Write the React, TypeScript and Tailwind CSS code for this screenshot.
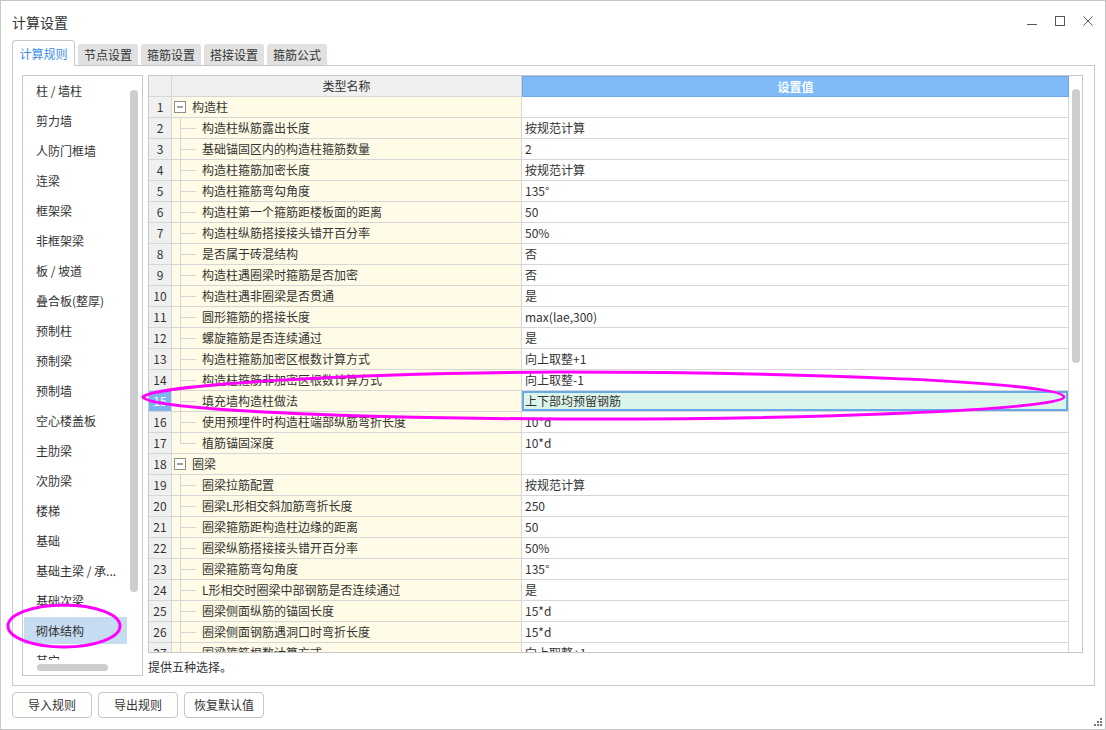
import React from "react";

type Row = { name: string; value?: string; group?: boolean; last?: boolean };

const leftItems = [
  "柱 / 墙柱",
  "剪力墙",
  "人防门框墙",
  "连梁",
  "框架梁",
  "非框架梁",
  "板 / 坡道",
  "叠合板(整厚)",
  "预制柱",
  "预制梁",
  "预制墙",
  "空心楼盖板",
  "主肋梁",
  "次肋梁",
  "楼梯",
  "基础",
  "基础主梁 / 承...",
  "基础次梁",
  "砌体结构",
  "其它",
];

const rows: Row[] = [
  { name: "构造柱", group: true },
  { name: "构造柱纵筋露出长度", value: "按规范计算" },
  { name: "基础锚固区内的构造柱箍筋数量", value: "2" },
  { name: "构造柱箍筋加密长度", value: "按规范计算" },
  { name: "构造柱箍筋弯勾角度", value: "135°" },
  { name: "构造柱第一个箍筋距楼板面的距离", value: "50" },
  { name: "构造柱纵筋搭接接头错开百分率", value: "50%" },
  { name: "是否属于砖混结构", value: "否" },
  { name: "构造柱遇圈梁时箍筋是否加密", value: "否" },
  { name: "构造柱遇非圈梁是否贯通", value: "是" },
  { name: "圆形箍筋的搭接长度", value: "max(lae,300)" },
  { name: "螺旋箍筋是否连续通过", value: "是" },
  { name: "构造柱箍筋加密区根数计算方式", value: "向上取整+1" },
  { name: "构造柱箍筋非加密区根数计算方式", value: "向上取整-1" },
  { name: "填充墙构造柱做法", value: "上下部均预留钢筋" },
  { name: "使用预埋件时构造柱端部纵筋弯折长度", value: "10*d" },
  { name: "植筋锚固深度", value: "10*d", last: true },
  { name: "圈梁", group: true },
  { name: "圈梁拉筋配置", value: "按规范计算" },
  { name: "圈梁L形相交斜加筋弯折长度", value: "250" },
  { name: "圈梁箍筋距构造柱边缘的距离", value: "50" },
  { name: "圈梁纵筋搭接接头错开百分率", value: "50%" },
  { name: "圈梁箍筋弯勾角度", value: "135°" },
  { name: "L形相交时圈梁中部钢筋是否连续通过", value: "是" },
  { name: "圈梁侧面纵筋的锚固长度", value: "15*d" },
  { name: "圈梁侧面钢筋遇洞口时弯折长度", value: "15*d" },
  { name: "圈梁箍筋根数计算方式", value: "向上取整+1" },
];

const SELECTED_ROW = 15;

const TreeLine = ({ last }: { last?: boolean }) => (
  <svg width="30" height="20" className="shrink-0">
    <line x1="8.5" y1="0" x2="8.5" y2={last ? 10.5 : 20} stroke="#d4d4d4" />
    <line x1="8.5" y1="10.5" x2="24" y2="10.5" stroke="#d4d4d4" />
  </svg>
);

const GroupBox = () => (
  <svg width="20" height="20" className="shrink-0">
    <rect x="2.5" y="4.5" width="11" height="11" fill="#fff" stroke="#8c8c8c" />
    <line x1="5" y1="10" x2="11" y2="10" stroke="#444" />
  </svg>
);

const TableRow = ({ row, n }: { row: Row; n: number }) => {
  const selected = n === SELECTED_ROW;
  return (
    <div className="flex h-[21px] shrink-0 border-b border-[#d6d6d6]">
      <div
        className={
          selected
            ? "w-[23px] shrink-0 border-r border-[#d6d6d6] bg-[#7cb4ef] text-white flex items-center justify-center"
            : "w-[23px] shrink-0 border-r border-[#d6d6d6] bg-[#f0f0f0] flex items-center justify-center"
        }
      >
        {n}
      </div>
      <div className="w-[350px] shrink-0 border-r border-[#d6d6d6] bg-[#fffbe6] flex items-center">
        {row.group ? <GroupBox /> : <TreeLine last={row.last} />}
        <span className="whitespace-nowrap">{row.name}</span>
      </div>
      <div
        className={
          selected
            ? "w-[547px] shrink-0 border-r border-[#d6d6d6] bg-[#dcf5ea] ring-2 ring-inset ring-[#6aa9e9] flex items-center pl-[3px]"
            : "w-[547px] shrink-0 border-r border-[#d6d6d6] flex items-center pl-[3px]"
        }
      >
        {row.value}
      </div>
    </div>
  );
};

const LeftList = () => (
  <div className="w-[121px] h-[601px] shrink-0 border border-[#c8c8c8] flex flex-col">
    <div className="flex h-[584px]">
      <div className="w-[107px] h-[584px] overflow-hidden flex flex-col">
        {leftItems.map((item) => (
          <div key={item} className="h-[30px] shrink-0 pt-[1px] pl-[1px]">
            <div
              className={
                item === "砌体结构"
                  ? "w-[103px] h-[27px] bg-[#c5dcf1] flex items-center pl-[12px] whitespace-nowrap"
                  : "w-[103px] h-[27px] flex items-center pl-[12px] whitespace-nowrap"
              }
            >
              {item}
            </div>
          </div>
        ))}
      </div>
      <div className="pt-[14px]">
        <div className="w-[8px] h-[502px] rounded-full bg-[#cdcdcd]" />
      </div>
    </div>
    <div className="pt-[4px] pl-[14px]">
      <div className="w-[71px] h-[7px] rounded-full bg-[#cdcdcd]" />
    </div>
  </div>
);

const DataTable = () => (
  <div className="w-[935px] h-[578px] shrink-0 border border-[#c8c8c8] flex">
    <div className="flex flex-col h-[576px] overflow-hidden">
      <div className="flex h-[21px] shrink-0">
        <div className="w-[23px] border-r border-b border-[#d6d6d6] bg-[#f0f0f0]" />
        <div className="w-[350px] border-r border-b border-[#d6d6d6] bg-[#f0f0f0] flex items-center justify-center">
          类型名称
        </div>
        <div className="w-[547px] border border-[#6ea8ea] bg-[#80bbf8] text-white font-semibold flex items-center justify-center">
          设置值
        </div>
      </div>
      {rows.map((row, i) => (
        <TableRow key={i} row={row} n={i + 1} />
      ))}
    </div>
    <div className="w-[13px] pt-[13px] pl-[3px]">
      <div className="w-[8px] h-[274px] rounded-full bg-[#cdcdcd]" />
    </div>
  </div>
);

const WindowControls = () => (
  <div className="flex items-center gap-[18px] pt-[1px]">
    <svg width="10" height="10">
      <line x1="0" y1="8.5" x2="10" y2="8.5" stroke="#555" />
    </svg>
    <svg width="10" height="10">
      <rect x="0.5" y="0.5" width="9" height="9" fill="none" stroke="#555" />
    </svg>
    <svg width="10" height="10">
      <path d="M0.5 0.5 L9.5 9.5 M9.5 0.5 L0.5 9.5" stroke="#555" />
    </svg>
  </div>
);

const App = () => {
  return (
    <div className="w-[1106px] h-[730px] bg-white border border-[#c6c6c6] relative flex flex-col text-[12px] leading-none text-[#333] font-['Noto_Sans_CJK_SC',sans-serif] overflow-hidden">
      {/* title bar */}
      <div className="h-[39px] shrink-0 flex items-center justify-between pl-[11px] pr-[12px]">
        <div className="text-[14px] pt-[2px]">计算设置</div>
        <WindowControls />
      </div>

      {/* tabs */}
      <div className="h-[25px] shrink-0 flex items-end pl-[11px] gap-[3px]">
        <div className="relative z-10 -mb-px h-[26px] w-[63px] bg-white border border-b-0 border-[#c8c8c8] rounded-t-[4px] flex items-center justify-center text-[#3a8ee6]">
          计算规则
        </div>
        {["节点设置", "箍筋设置", "搭接设置", "箍筋公式"].map((t) => (
          <div
            key={t}
            className="h-[21px] w-[60px] bg-[#e1e1e1] rounded-t-[3px] flex items-center justify-center"
          >
            {t}
          </div>
        ))}
      </div>

      {/* panel */}
      <div className="ml-[11px] w-[1083px] h-[621px] shrink-0 border border-[#c8c8c8] p-[9px] flex gap-[5px]">
        <LeftList />
        <div className="flex flex-col">
          <DataTable />
          <div className="pt-[8px] whitespace-nowrap">提供五种选择。</div>
        </div>
      </div>

      {/* buttons */}
      <div className="mt-[6px] ml-[11px] flex gap-[6px]">
        {["导入规则", "导出规则", "恢复默认值"].map((b) => (
          <div
            key={b}
            className="w-[80px] h-[26px] border border-[#c6c6c6] rounded-[4px] flex items-center justify-center"
          >
            {b}
          </div>
        ))}
      </div>

      {/* resize grip */}
      <svg width="10" height="10" className="absolute right-[2px] bottom-[2px]">
        <rect x="7" y="1" width="2" height="2" fill="#777" />
        <rect x="4" y="4" width="2" height="2" fill="#777" />
        <rect x="7" y="4" width="2" height="2" fill="#777" />
        <rect x="1" y="7" width="2" height="2" fill="#777" />
        <rect x="4" y="7" width="2" height="2" fill="#777" />
        <rect x="7" y="7" width="2" height="2" fill="#777" />
      </svg>

      {/* hand-drawn annotation marks */}
      <svg
        width="1106"
        height="730"
        className="absolute left-[-1px] top-[-1px] pointer-events-none"
      >
        <path
          d="M143 397 C 152 385, 350 373, 560 372 C 800 372, 1064 382, 1064 397 C 1064 410, 800 420, 560 419 C 350 418, 150 410, 143 397 Z"
          fill="none"
          stroke="#ff00ff"
          strokeWidth="3"
        />
        <ellipse
          cx="64"
          cy="626"
          rx="56"
          ry="21"
          fill="none"
          stroke="#ff00ff"
          strokeWidth="3"
        />
      </svg>
    </div>
  );
};

export default App;
